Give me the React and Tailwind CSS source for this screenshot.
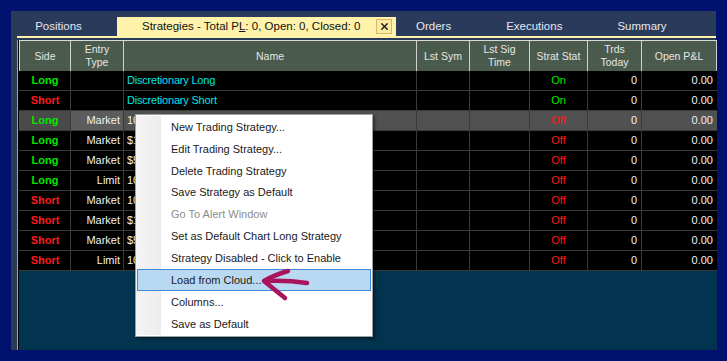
import { X } from 'lucide-react'

const cols = [
  { key: 'side', label: 'Side', w: 'w-[51px]' },
  { key: 'entry', label: ['Entry', 'Type'], w: 'w-[53px]' },
  { key: 'name', label: 'Name', w: 'w-[293px]' },
  { key: 'sym', label: 'Lst Sym', w: 'w-[53px]' },
  { key: 'sig', label: ['Lst Sig', 'Time'], w: 'w-[60px]' },
  { key: 'stat', label: 'Strat Stat', w: 'w-[58px]' },
  { key: 'trds', label: ['Trds', 'Today'], w: 'w-[54px]' },
  { key: 'pl', label: 'Open P&L', w: 'w-[75px]' },
]

// names of the plain strategies are hidden under the menu; only their first chars show
const rows = [
  { side: 'Long', entry: '', name: 'Discretionary Long', disc: true, on: true },
  { side: 'Short', entry: '', name: 'Discretionary Short', disc: true, on: true },
  { side: 'Long', entry: 'Market', name: '10', sel: true },
  { side: 'Long', entry: 'Market', name: '$1' },
  { side: 'Long', entry: 'Market', name: '$5' },
  { side: 'Long', entry: 'Limit', name: '10' },
  { side: 'Short', entry: 'Market', name: '10' },
  { side: 'Short', entry: 'Market', name: '$1' },
  { side: 'Short', entry: 'Market', name: '$5' },
  { side: 'Short', entry: 'Limit', name: '10' },
]

const menu = [
  { t: 'New Trading Strategy...' },
  { t: 'Edit Trading Strategy...' },
  { t: 'Delete Trading Strategy' },
  { t: 'Save Strategy as Default' },
  { t: 'Go To Alert Window', off: true },
  { t: 'Set as Default Chart Long Strategy' },
  { t: 'Strategy Disabled - Click to Enable' },
  { t: 'Load from Cloud...', hot: true },
  { t: 'Columns...' },
  { t: 'Save as Default' },
]

const Tab = ({ children, className = '' }) => (
  <div className={`h-[19px] flex items-center text-[11.5px] text-[#e4e8f0] ${className}`}>{children}</div>
)

export default function App() {
  return (
    <div className="relative w-[727px] h-[361px] bg-[#00126e] p-[11px]" style={{ fontFamily: '"Liberation Sans", Arial, sans-serif' }}>
      <div className="h-full bg-[#2a3a5a] flex flex-col">
        {/* tabs */}
        <div className="flex items-end h-[25px]">
          <Tab className="w-[106px] justify-center pr-[11px]">Positions</Tab>
          <div className="h-[19px] w-[279px] bg-[#fff2ab] flex items-center pl-[25px] pr-[4px] text-[11.5px] text-[#111]">
            <span className="flex-1">Strategies - Total P<span className="underline">L</span>: 0, Open: 0, Closed: 0</span>
            <span className="w-[16px] h-[15px] border border-[#d8b868] bg-[#fbe9a0] flex items-center justify-center">
              <X size={11} strokeWidth={3.2} className="text-[#222]" />
            </span>
          </div>
          <Tab className="pl-[20px] pr-[35px]">Orders</Tab>
          <Tab className="pl-[20px] pr-[35px]">Executions</Tab>
          <Tab className="pl-[20px]">Summary</Tab>
        </div>
        <div className="ml-[6px] h-[2px] bg-[#fff2ab]" />
        <div className="h-[2px]" />

        {/* grid */}
        <div className="flex-1 ml-[6px] border-l border-[#9aa4b8] flex">
          <div className="flex-1 border-l border-black bg-[#03344f] flex flex-col">
            <div className="flex h-[31px] border-t border-[#d8d8d8] bg-[#4a5a4c] text-[10.5px] text-[#e6e6e6] leading-[13px]">
              <div className="w-[1px] bg-[#d8d8d8]" />
              {cols.map(c => (
                <div key={c.key} className={`${c.w} border-r border-[#d0d0d0] flex flex-col items-center justify-center text-center`}>
                  {Array.isArray(c.label) ? c.label.map(l => <span key={l}>{l}</span>) : c.label}
                </div>
              ))}
            </div>
            {rows.map((r, i) => (
              <div key={i} className={`flex h-[20px] border-b border-[#3a3a3a] text-[11px] leading-[19px] pl-[1px] ${r.sel ? 'bg-[#515151]' : 'bg-black'}`}>
                <div className={`w-[51px] border-r border-[#3a3a3a] text-center font-bold ${r.side === 'Long' ? 'text-[#00e600]' : 'text-[#ff1a1a]'} ${r.sel ? 'bg-[#4a4a4a]' : ''}`}>{r.side}</div>
                <div className={`w-[53px] border-r border-[#3a3a3a] text-right pr-[3px] text-[#f0f0f0] ${r.sel ? 'bg-[#5c5c5c]' : ''}`}>{r.entry}</div>
                <div className={`w-[293px] border-r border-[#3a3a3a] pl-[3px] overflow-hidden whitespace-nowrap tracking-[-0.2px] ${r.disc ? 'text-[#00e4e4]' : 'text-[#f0f0f0]'}`}>{r.name}</div>
                <div className="w-[53px] border-r border-[#3a3a3a]" />
                <div className="w-[60px] border-r border-[#3a3a3a]" />
                <div className={`w-[58px] border-r border-[#3a3a3a] text-center ${r.on ? 'text-[#00e600]' : 'text-[#ff1a1a]'}`}>{r.on ? 'On' : 'Off'}</div>
                <div className="w-[54px] border-r border-[#3a3a3a] text-right pr-[4px] text-[#f0f0f0]">0</div>
                <div className="w-[75px] text-right pr-[4px] text-[#f0f0f0]">0.00</div>
              </div>
            ))}
          </div>
        </div>
      </div>

      {/* context menu */}
      <div className="absolute left-[135px] top-[114px] w-[238px] h-[223px] bg-white border border-[#a0a0a0] shadow-[2px_2px_3px_rgba(0,0,0,0.45)] py-[1px] pr-[1px] flex">
        <div className="w-[25px] bg-gradient-to-r from-[#f4f4f4] to-[#ececec]" />
        <div className="flex-1 flex flex-col -ml-[24px]">
          {menu.map(m => (
            <div key={m.t} className={`h-[22px] flex items-center text-[11px] ${m.off ? 'text-[#8c8c8c]' : 'text-[#1a1a1a]'} ${m.hot ? 'bg-[#b9d9f3] border border-[#3c8ad8] pl-[33px]' : 'pl-[34px]'}`}>
              {m.t}
            </div>
          ))}
        </div>
      </div>

      {/* annotation arrow */}
      <svg className="absolute left-0 top-0 pointer-events-none" width="727" height="361">
        <path d="M288 271 Q274 275 264 281 Q275 290 285 298" fill="none" stroke="#a8155c" strokeWidth="4.5" strokeLinecap="round" strokeLinejoin="round" />
        <path d="M265 281 Q287 280 307 283" fill="none" stroke="#a8155c" strokeWidth="4.5" strokeLinecap="round" />
      </svg>
    </div>
  )
}
